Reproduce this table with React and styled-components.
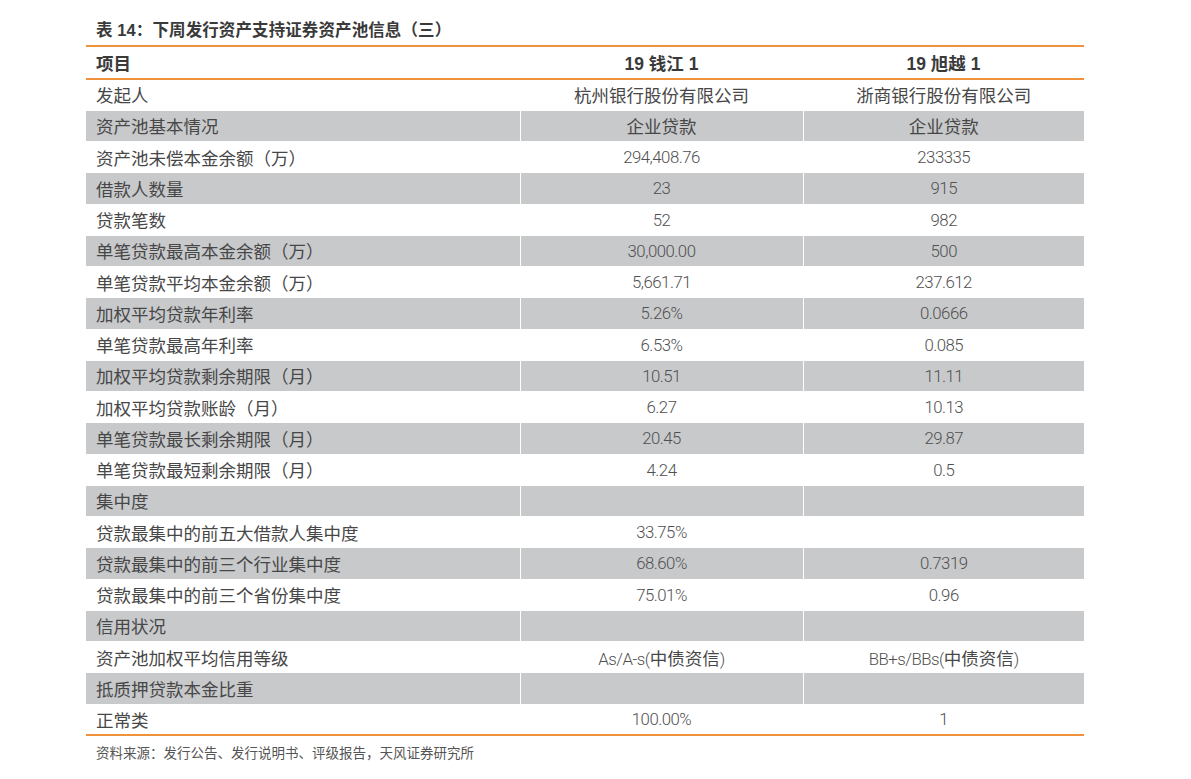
import React from 'react';
import styled, { createGlobalStyle } from 'styled-components';

const GlobalStyle = createGlobalStyle`
  html, body {
    margin: 0;
    padding: 0;
    background: #ffffff;
  }
  body {
    font-family: "Liberation Sans", "Noto Sans CJK SC", sans-serif;
  }
`;

const Page = styled.div`
  width: 1191px;
  height: 779px;
  padding: 18px 107px 0 86px;
  box-sizing: border-box;
  display: flex;
  flex-direction: column;
`;

const Title = styled.div`
  padding-left: 10px;
  height: 27px;
  line-height: 24px;
  font-size: 16.5px;
  font-weight: bold;
  color: #3a3a3a;
  letter-spacing: 0.1px;
`;

const Table = styled.table`
  width: 998px;
  border-collapse: collapse;
  table-layout: fixed;
  border-top: 2px solid #f0913c;
  border-bottom: 2px solid #f0913c;
  font-size: 18px;
  color: #474747;
`;

const HeadRow = styled.tr`
  height: 33px;
  border-bottom: 2px solid #f0913c;
`;

const HeadCell = styled.th`
  font-weight: bold;
  font-size: 17.5px;
  color: #3a3a3a;
  padding: 0 10px;
  text-align: ${p => (p.$left ? 'left' : 'center')};
`;

const Row = styled.tr`
  height: 31.25px;
  background: ${p => (p.$shaded ? '#c8c9cb' : '#ffffff')};
  border-top: 1px solid #ffffff;
`;

const Cell = styled.td`
  padding: 0 10px;
  white-space: nowrap;
  font-size: ${p => (p.$left ? '17.5px' : '16.8px')};
  font-family: ${p =>
    p.$left
      ? '"Liberation Sans", "Noto Sans CJK SC", sans-serif'
      : 'Roboto, "Noto Sans CJK SC", sans-serif'};
  font-weight: ${p => (p.$left ? 'normal' : 300)};
  letter-spacing: ${p => (p.$left ? '0' : '-0.5px')};
  color: ${p => (p.$left ? '#474747' : '#505050')};
  text-align: ${p => (p.$left ? 'left' : 'center')};
  border-left: ${p => (p.$left ? 'none' : '1px solid #ffffff')};
`;

const Cjk = styled.span`
  font-family: "Noto Sans CJK SC", sans-serif;
  font-size: 17.5px;
  font-weight: normal;
  letter-spacing: 0;
  color: #474747;
`;

const Source = styled.div`
  padding: 6px 0 0 10px;
  font-size: 13.5px;
  color: #555555;
`;

const rows = [
  ['发起人', '杭州银行股份有限公司', '浙商银行股份有限公司'],
  ['资产池基本情况', '企业贷款', '企业贷款'],
  ['资产池未偿本金余额（万）', '294,408.76', '233335'],
  ['借款人数量', '23', '915'],
  ['贷款笔数', '52', '982'],
  ['单笔贷款最高本金余额（万）', '30,000.00', '500'],
  ['单笔贷款平均本金余额（万）', '5,661.71', '237.612'],
  ['加权平均贷款年利率', '5.26%', '0.0666'],
  ['单笔贷款最高年利率', '6.53%', '0.085'],
  ['加权平均贷款剩余期限（月）', '10.51', '11.11'],
  ['加权平均贷款账龄（月）', '6.27', '10.13'],
  ['单笔贷款最长剩余期限（月）', '20.45', '29.87'],
  ['单笔贷款最短剩余期限（月）', '4.24', '0.5'],
  ['集中度', '', ''],
  ['贷款最集中的前五大借款人集中度', '33.75%', ''],
  ['贷款最集中的前三个行业集中度', '68.60%', '0.7319'],
  ['贷款最集中的前三个省份集中度', '75.01%', '0.96'],
  ['信用状况', '', ''],
  ['资产池加权平均信用等级', 'As/A-s(中债资信)', 'BB+s/BBs(中债资信)'],
  ['抵质押贷款本金比重', '', ''],
  ['正常类', '100.00%', '1'],
];

// split a value so CJK runs get the CJK face and size, the rest stays condensed
function Value({ text }) {
  const parts = text.split(/([\u4e00-\u9fff]+)/).filter(Boolean);
  return parts.map((p, i) =>
    /[\u4e00-\u9fff]/.test(p) ? <Cjk key={i}>{p}</Cjk> : <React.Fragment key={i}>{p}</React.Fragment>
  );
}

export default function App() {
  return (
    <>
      <GlobalStyle />
      <Page>
        <Title>表 14：下周发行资产支持证券资产池信息（三）</Title>
        <Table>
          <colgroup>
            <col style={{ width: 434 }} />
            <col style={{ width: 283 }} />
            <col style={{ width: 281 }} />
          </colgroup>
          <thead>
            <HeadRow>
              <HeadCell $left>项目</HeadCell>
              <HeadCell>19 钱江 1</HeadCell>
              <HeadCell>19 旭越 1</HeadCell>
            </HeadRow>
          </thead>
          <tbody>
            {rows.map((r, i) => (
              <Row key={r[0]} $shaded={i % 2 === 1}>
                <Cell $left>{r[0]}</Cell>
                <Cell><Value text={r[1]} /></Cell>
                <Cell><Value text={r[2]} /></Cell>
              </Row>
            ))}
          </tbody>
        </Table>
        <Source>资料来源：发行公告、发行说明书、评级报告，天风证券研究所</Source>
      </Page>
    </>
  );
}
